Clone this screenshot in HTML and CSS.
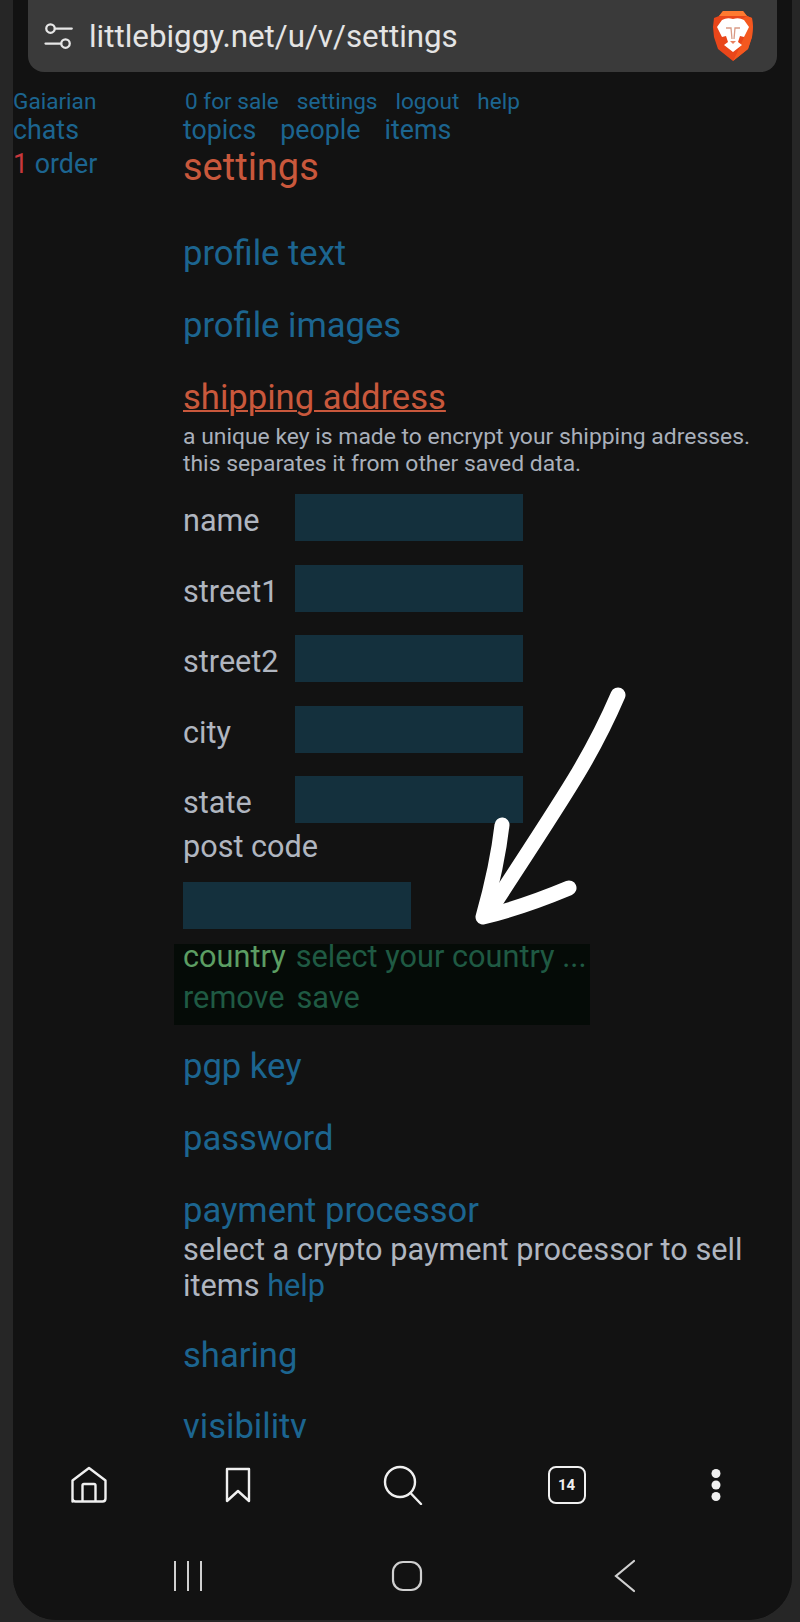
FILE: index.html
```html
<!DOCTYPE html>
<html lang="en">
<head>
<meta charset="utf-8">
<title>settings</title>
<link rel="stylesheet" href="styles.css">
</head>
<body>
<div class="screen">
  <header class="urlbar">
    <svg class="tune" viewBox="0 0 24 24" width="30" height="30" fill="none" stroke="#e6e6e6" stroke-width="1.8" stroke-linecap="round"><circle cx="6" cy="6" r="3.400"/><path d="M9.500 6H23"/><circle cx="18" cy="18" r="3.400"/><path d="M14.500 18H2"/></svg>
    <span class="url">littlebiggy.net/u/v/settings</span>
    <svg class="brave" viewBox="0 0 42 50" width="42" height="50"><path d="M11 0H31L35 5 40 7 41 16 40 26 36 38 21 50 6 38 2 26 1 16 2 7 7 5Z" fill="#e9461a"/><path d="M11 0H31L35 5H7Z" fill="#ff7a30"/><path d="M21 50 36 38 40 26 41 16 40 7 35 5 30 8 33 24 26 40Z" fill="#f4581f"/><path d="M10 9Q15 6 21 8 27 6 32 9L37 16 32 26 28 25 26 31 30 34 21 41 12 34 16 31 14 25 10 26 5 16Z" fill="#fff"/><path d="M14 17H19L20 28M28 17H23L22 28" fill="none" stroke="#d99a85" stroke-width="1.300"/><path d="M18 30H24L21 33Z" fill="#e9805f"/></svg>
  </header>
  <main class="page">
    <aside class="side">
      <a class="small">Gaiarian</a>
      <a class="mid">chats</a>
      <a class="mid order"><span class="red">1</span> order</a>
    </aside>
    <section class="content">
      <nav class="nav-top"><a>0 for sale</a><a>settings</a><a>logout</a><a>help</a></nav>
      <nav class="nav-main"><a>topics</a><a>people</a><a>items</a></nav>
      <h1 class="title">settings</h1>
      <h2 class="sec first">profile text</h2>
      <h2 class="sec">profile images</h2>
      <h2 class="sec active">shipping address</h2>
      <p class="note">a unique key is made to encrypt your shipping adresses.<br>this separates it from other saved data.</p>
      <div class="fields">
        <div class="field"><label>name</label><span class="input"></span></div>
        <div class="field"><label>street1</label><span class="input"></span></div>
        <div class="field"><label>street2</label><span class="input"></span></div>
        <div class="field"><label>city</label><span class="input"></span></div>
        <div class="field"><label>state</label><span class="input"></span></div>
      </div>
      <div class="postlabel">post code</div>
      <span class="input postinput"></span>
      <div class="countrybox">
        <div class="crow"><span class="clabel">country</span><span class="cval">select your country ...</span></div>
        <div class="crow second"><span class="cval">remove</span><span class="cval">save</span></div>
      </div>
      <h2 class="sec pgp">pgp key</h2>
      <h2 class="sec">password</h2>
      <h2 class="sec">payment processor</h2>
      <p class="pay">select a crypto payment processor to sell<br>items <a>help</a></p>
      <h2 class="sec share">sharing</h2>
      <h2 class="sec vis">visibility</h2>
    </section>
  </main>
  <footer class="bars">
    <div class="toolbar">
      <svg viewBox="0 0 40 40" width="40" height="40" fill="none" stroke="#f0f0f0" stroke-width="2.400" stroke-linejoin="round"><path d="M3.500 36.500V15.500L20 3 36.500 15.500V33.500q0 3-3 3H6.500q-3 0-3-3z"/><path d="M13.500 36.500V20.500q0-1.500 1.500-1.500H25q1.500 0 1.500 1.500V36.500"/></svg>
      <svg viewBox="0 0 40 40" width="40" height="40" fill="none" stroke="#f0f0f0" stroke-width="2.400" stroke-linejoin="round"><path d="M9 4H31V36L20 26 9 36z"/></svg>
      <svg viewBox="0 0 40 40" width="40" height="40" fill="none" stroke="#f0f0f0" stroke-width="2.400" stroke-linecap="round"><circle cx="17" cy="17" r="15"/><path d="M27.500 28 38 39"/></svg>
      <div class="tabs">14</div>
      <svg viewBox="0 0 40 40" width="40" height="40" fill="#f0f0f0"><circle cx="20" cy="8.500" r="4.500"/><circle cx="20" cy="20" r="4.500"/><circle cx="20" cy="31.500" r="4.500"/></svg>
    </div>
    <div class="sysbar">
      <svg viewBox="0 0 40 40" width="40" height="40" fill="none" stroke="#d0d0d0" stroke-width="2"><path d="M7 5V35M20 5V35M33 5V35"/></svg>
      <svg viewBox="0 0 40 40" width="40" height="40" fill="none" stroke="#d0d0d0" stroke-width="2.200"><rect x="6" y="6" width="28" height="28" rx="10"/></svg>
      <svg viewBox="0 0 40 40" width="40" height="40" fill="none" stroke="#d0d0d0" stroke-width="2.200" stroke-linecap="round"><path d="M29 5 11 20 29 35"/></svg>
    </div>
  </footer>
  <svg class="arrow" viewBox="0 0 180 270" width="180" height="270" fill="none" stroke="#fff" stroke-width="15" stroke-linecap="round" stroke-linejoin="round"><path d="M158 25C130 90 105 125 27 245"/><path d="M42 155C38 190 32 215 23 247 60 238 85 228 109 218"/></svg>
</div>
</body>
</html>
```
FILE: styles.css
```css
* { box-sizing: border-box; }
html, body { margin: 0; padding: 0; background: #262626; }
body { width: 800px; height: 1622px; overflow: hidden; font-family: Roboto, "Liberation Sans", sans-serif; }
.screen { position: relative; width: 779px; height: 1620px; margin-left: 13px; background: #121212; border-radius: 0 0 44px 44px; display: flex; flex-direction: column; overflow: hidden; }
.urlbar { height: 72px; margin: 0 15px; background: #3a3a3a; border-radius: 0 0 16px 16px; display: flex; align-items: center; padding: 0 23px 0 15px; flex: none; }
.tune { flex: none; margin-right: 16px; }
.url { flex: 1; color: #e4e4e4; font-size: 31.300px; }
.brave { flex: none; margin-top: -1px; }
.page { display: flex; flex: 1; min-height: 0; overflow: hidden; padding-top: 17px; }
.side { width: 170px; flex: none; display: flex; flex-direction: column; }
a { color: #1c6590; }
.small { font-size: 22.600px; line-height: 26px; }
.mid { font-size: 26.800px; line-height: 31px; }
.order { margin-top: 3px; }
.red { color: #c8383c; }
.content { flex: 1; min-width: 0; }
.nav-top { display: flex; gap: 18px; font-size: 22.600px; line-height: 26px; padding-left: 2px; }
.nav-main { display: flex; gap: 24px; font-size: 26.800px; line-height: 31px; }
.title { margin: -1px 0 0; color: #c9583c; font-size: 38px; font-weight: 400; line-height: 44px; }
.sec { margin: 28px 0 0; color: #1c6590; font-size: 34.600px; font-weight: 400; line-height: 44px; }
.sec.first { margin-top: 42px; }
.sec.active { color: #c9583c; text-decoration: underline; text-decoration-thickness: 2px; }
.note { margin: 4px 0 0; color: #a9b0bb; font-size: 22.900px; line-height: 27px; }
.fields { display: flex; flex-direction: column; gap: 23.500px; margin-top: 17px; }
.field { display: flex; align-items: center; }
.field label { width: 112px; color: #b0b6c0; font-size: 30.600px; padding-top: 6px; }
.input { display: block; width: 228px; height: 47px; background: #14303d; }
.postlabel { color: #b0b6c0; font-size: 30.600px; line-height: 36px; margin-top: 6px; }
.postinput { margin-top: 17px; }
.countrybox { margin: 15px 0 0 -9px; width: 416px; height: 81px; background: #050b07; padding: 0 9px; }
.crow { display: flex; gap: 10px; font-size: 30.700px; line-height: 26px; white-space: nowrap; }
.crow.second { margin-top: 15px; gap: 12px; }
.clabel { color: #5c9e63; }
.cval { color: #1f5a43; }
.sec.pgp { margin-top: 19px; }
.pay { margin: 0; color: #b0b6c0; font-size: 30.700px; line-height: 36px; }
.sec.share { margin-top: 29px; }
.sec.vis { margin-top: 27px; }
.bars { flex: none; background: #121212; }
.toolbar { height: 94px; display: grid; grid-template-columns: 149px 149px 181px 147px 151px; justify-items: center; align-items: center; padding-left: 1px; }
.tabs { width: 38px; height: 38px; border: 2.400px solid #f0f0f0; border-radius: 8px; color: #f0f0f0; font-size: 15px; font-weight: 700; display: flex; align-items: center; justify-content: center; }
.sysbar { height: 88px; display: flex; justify-content: space-between; align-items: center; padding: 0 147px 0 155px; }
.arrow { position: absolute; left: 447px; top: 670px; }
```
